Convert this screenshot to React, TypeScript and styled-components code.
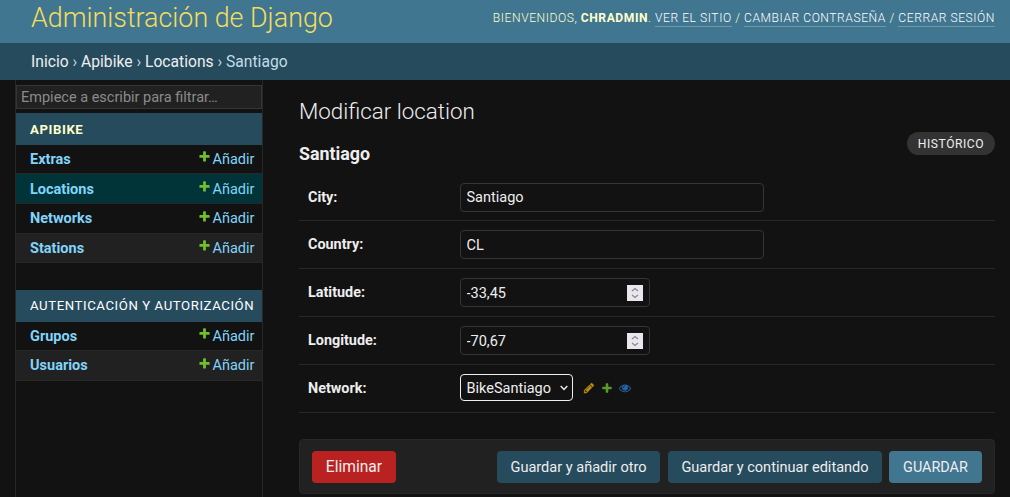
import React from 'react';
import styled, { createGlobalStyle } from 'styled-components';

const GlobalStyle = createGlobalStyle`
  * { box-sizing: border-box; }
  html, body { margin: 0; padding: 0; background: #121212; overflow: hidden; }
  body { font-family: Roboto, "Liberation Sans", sans-serif; font-size: 14.5px; color: #eee; }
  a { color: inherit; text-decoration: none; }
  h1, h2 { margin: 0; }
  input, select, button { font-family: inherit; }
`;

const Page = styled.div`
  height: 497px;
  display: flex;
  flex-direction: column;
  overflow: hidden;
`;

const Header = styled.header`
  height: 43px;
  flex: none;
  display: flex;
  justify-content: space-between;
  padding: 0 15px 0 31px;
  background: #417690;
`;

const SiteName = styled.h1`
  font-size: 26.85px;
  font-weight: 300;
  line-height: 37px;
  color: #f5dd5d;
  white-space: nowrap;
`;

const UserTools = styled.div`
  font-size: 12.1px;
  font-weight: 300;
  letter-spacing: 0.55px;
  line-height: 16px;
  padding-top: 10px;
  color: #ffc;
  text-transform: uppercase;
  white-space: nowrap;

  strong { font-weight: 700; }
`;

const ToolLink = styled.a`
  display: inline-block;
  line-height: 15px;
  color: #fff;
  border-bottom: 1px solid rgba(255, 255, 255, 0.25);
`;

const Breadcrumbs = styled.nav`
  height: 37px;
  flex: none;
  padding-left: 31px;
  line-height: 37px;
  font-size: 15.65px;
  background: #264b5d;
  color: #c4dce8;

  a { color: #eee; }
`;

const Main = styled.div`
  flex: 1;
  min-height: 0;
  display: flex;
  padding-left: 15px;
`;

const Sidebar = styled.nav`
  width: 248px;
  flex: none;
  padding-top: 5px;
  border: solid #272727;
  border-width: 0 1px;
`;

const FilterInput = styled.input`
  display: block;
  width: 246px;
  height: 24px;
  margin-bottom: 4px;
  padding: 0 4px;
  border: 1px solid #353535;
  background: #212121;
  font-size: 14.5px;
  color: #eee;
  outline: none;

  &::placeholder { color: #8b8b8b; opacity: 1; }
`;

const Module = styled.section`
  margin-bottom: 27px;
`;

const Caption = styled.h2<{ $current?: boolean }>`
  height: 32px;
  padding-left: 14px;
  line-height: ${p => (p.$current ? 33 : 31)}px;
  font-size: 13.2px;
  font-weight: ${p => (p.$current ? 700 : 400)};
  letter-spacing: 0.58px;
  text-transform: uppercase;
  white-space: nowrap;
  background: #264b5d;
  color: ${p => (p.$current ? '#ffc' : '#fff')};
`;

const ModelRow = styled.div<{ $bg?: string; $height: number; $lowered?: boolean }>`
  height: ${p => p.$height}px;
  display: flex;
  align-items: center;
  justify-content: space-between;
  padding: ${p => (p.$lowered ? 1 : 0)}px 7.5px 0 14px;
  border-bottom: 1px solid #272727;
  background: ${p => p.$bg || '#121212'};
  color: #81d4fa;
`;

const ModelLink = styled.a`
  font-weight: 700;
`;

const AddLink = styled.a`
  display: flex;
  align-items: center;
  gap: 2px;

  svg { margin-top: -5px; }
`;

const Content = styled.main`
  flex: 1;
  min-width: 0;
  padding: 18px 15px 0 36px;
`;

const Title = styled.h1`
  height: 44px;
  font-size: 22.35px;
  font-weight: 300;
  line-height: 27px;
`;

const ObjectHeading = styled.div`
  height: 31px;
  display: flex;
  justify-content: space-between;

  h2 {
    font-size: 17.85px;
    font-weight: 700;
    line-height: 24px;
  }
`;

const HistoryLink = styled.a`
  width: 88px;
  height: 23px;
  margin-top: -10px;
  border-radius: 12px;
  background: #333;
  font-size: 12.1px;
  line-height: 24px;
  letter-spacing: 0.55px;
  text-align: center;
  text-transform: uppercase;
`;

const FormRow = styled.div<{ $top?: number }>`
  height: 48px;
  display: flex;
  align-items: flex-start;
  padding: ${p => p.$top ?? 9}px 9px 0;
  border-bottom: 1px solid #272727;
`;

const Label = styled.label`
  width: 152px;
  flex: none;
  line-height: 29px;
  font-size: 14.4px;
  font-weight: 700;
`;

const Field = styled.div<{ $width: number }>`
  width: ${p => p.$width}px;
  height: 29px;
  display: flex;
  align-items: center;
  padding: 0 6px 0 5.5px;
  border: 1px solid #353535;
  border-radius: 4px;
`;

const FieldInput = styled.input<{ $lowered?: boolean }>`
  flex: 1;
  min-width: 0;
  padding: ${p => (p.$lowered ? 2 : 0)}px 0 0;
  border: 0;
  outline: none;
  background: transparent;
  font-size: 14.5px;
  color: #eee;
`;

const Spinner = styled.span`
  width: 16px;
  height: 16px;
  display: flex;
  align-items: center;
  justify-content: center;
  background: #e9e7ed;
`;

const Select = styled.button`
  width: 113px;
  height: 27px;
  display: flex;
  align-items: center;
  justify-content: space-between;
  padding: 1px 4px 0 5.5px;
  border: 1px solid #eee;
  border-radius: 4px;
  background: #121212;
  font-size: 14.5px;
  color: #eee;
`;

const RelatedLinks = styled.div`
  height: 28px;
  display: flex;
  align-items: center;
  gap: 6px;
  margin-left: 10px;
`;

const SubmitRow = styled.div`
  height: 55px;
  display: flex;
  align-items: flex-start;
  margin-top: 26px;
  padding: 11px 12px;
  border: 1px solid #272727;
  border-radius: 4px;
  background: #212121;
`;

const Button = styled.button<{ $bg: string; $width: number; $size?: number; $gap?: number }>`
  width: ${p => p.$width}px;
  height: 32px;
  margin-left: ${p => p.$gap || 0}px;
  padding: 0;
  border: 0;
  border-radius: 4px;
  background: ${p => p.$bg};
  color: #eee;
  font-size: ${p => p.$size || 14.55}px;
  white-space: nowrap;
`;

const Spacer = styled.div`
  flex: 1;
`;

const PLUS = 'M1600 796v192q0 40-28 68t-68 28h-416v416q0 40-28 68t-68 28h-192q-40 0-68-28t-28-68v-416h-416q-40 0-68-28t-28-68v-192q0-40 28-68t68-28h416v-416q0-40 28-68t68-28h192q40 0 68 28t28 68v416h416q40 0 68 28t28 68z';
const PENCIL = 'M491 1536l91-91-235-235-91 91v107h128v128h107zm523-928q0-22-22-22-10 0-17 7l-542 542q-7 7-7 17 0 22 22 22 10 0 17-7l542-542q7-7 7-17zm-54-192l416 416-832 832h-416v-416zm683 96q0 53-37 90l-166 166-416-416 166-165q36-38 90-38 53 0 91 38l235 234q37 39 37 91z';
const EYE = 'M1664 960q-152-236-381-353 61 104 61 225 0 185-131.500 316.500t-316.500 131.500-316.500-131.500-131.500-316.500q0-121 61-225-229 117-381 353 133 205 333.500 326.500t434.500 121.500 434.500-121.500 333.500-326.500zm-720-384q0-20-14-34t-34-14q-125 0-214.500 89.500t-89.500 214.500q0 20 14 34t34 14 34-14 14-34q0-86 61-147t147-61q20 0 34-14t14-34zm848 384q0 34-20 69-140 230-376.500 368.500t-499.500 138.500-499.500-139-376.500-368q-20-35-20-69t20-69q140-229 376.500-368t499.500-139 499.500 139 376.500 368q20 35 20 69z';

const Icon = ({ d, color, size = 12 }: { d: string; color: string; size?: number }) => (
  <svg width={size} height={size} viewBox="0 0 1792 1792" fill={color}>
    <path d={d} />
  </svg>
);

const Arrows = () => (
  <svg width="8" height="12" viewBox="0 0 8 12" fill="none" stroke="#8a8890" strokeWidth="1.3">
    <path d="M1 4 L4 1.500 L7 4 M1 8 L4 10.500 L7 8" />
  </svg>
);

const Model = ({ name, bg, height, lowered }: { name: string; bg?: string; height: number; lowered?: boolean }) => (
  <ModelRow $bg={bg} $height={height} $lowered={lowered}>
    <ModelLink href="#">{name}</ModelLink>
    <AddLink href="#">
      <Icon d={PLUS} color="#70bf2b" size={13} />
      Añadir
    </AddLink>
  </ModelRow>
);

type TextRowProps = { label: string; value: string; width: number; number?: boolean; top?: number };

const TextRow = ({ label, value, width, number, top }: TextRowProps) => (
  <FormRow $top={top}>
    <Label>{label}</Label>
    <Field $width={width}>
      <FieldInput defaultValue={value} $lowered={top === undefined} />
      {number && <Spinner><Arrows /></Spinner>}
    </Field>
  </FormRow>
);

export default function App() {
  return (
    <Page>
      <GlobalStyle />
      <Header>
        <SiteName>Administración de Django</SiteName>
        <UserTools>
          Bienvenidos, <strong>chradmin</strong>. <ToolLink href="#">Ver el sitio</ToolLink> /{' '}
          <ToolLink href="#">Cambiar contraseña</ToolLink> / <ToolLink href="#">Cerrar sesión</ToolLink>
        </UserTools>
      </Header>
      <Breadcrumbs>
        <a href="#">Inicio</a> › <a href="#">Apibike</a> › <a href="#">Locations</a> › Santiago
      </Breadcrumbs>
      <Main>
        <Sidebar>
          <FilterInput placeholder="Empiece a escribir para filtrar…" />
          <Module>
            <Caption $current>Apibike</Caption>
            <Model name="Extras" height={29} />
            <Model name="Locations" bg="#003438" height={30} lowered />
            <Model name="Networks" height={30} />
            <Model name="Stations" bg="#212121" height={29} />
          </Module>
          <Module>
            <Caption>Autenticación y autorización</Caption>
            <Model name="Grupos" height={29} />
            <Model name="Usuarios" bg="#212121" height={30} />
          </Module>
        </Sidebar>
        <Content>
          <Title>Modificar location</Title>
          <ObjectHeading>
            <h2>Santiago</h2>
            <HistoryLink href="#">Histórico</HistoryLink>
          </ObjectHeading>
          <TextRow label="City:" value="Santiago" width={304} top={10} />
          <TextRow label="Country:" value="CL" width={304} />
          <TextRow label="Latitude:" value="-33,45" width={190} number />
          <TextRow label="Longitude:" value="-70,67" width={190} number />
          <FormRow>
            <Label>Network:</Label>
            <Select>
              BikeSantiago
              <svg width="8" height="6" viewBox="0 0 8 6" fill="none" stroke="#eee" strokeWidth="1.4">
                <path d="M0.700 1 L4 4.500 L7.300 1" />
              </svg>
            </Select>
            <RelatedLinks>
              <Icon d={PENCIL} color="#b78b0c" />
              <Icon d={PLUS} color="#5a9a28" />
              <Icon d={EYE} color="#2464a4" />
            </RelatedLinks>
          </FormRow>
          <SubmitRow>
            <Button $bg="#ba2121" $width={84} $size={15.6}>Eliminar</Button>
            <Spacer />
            <Button $bg="#264b5d" $width={163}>Guardar y añadir otro</Button>
            <Button $bg="#264b5d" $width={214} $gap={8}>Guardar y continuar editando</Button>
            <Button $bg="#417690" $width={93} $gap={7} $size={14.4}>GUARDAR</Button>
          </SubmitRow>
        </Content>
      </Main>
    </Page>
  );
}
